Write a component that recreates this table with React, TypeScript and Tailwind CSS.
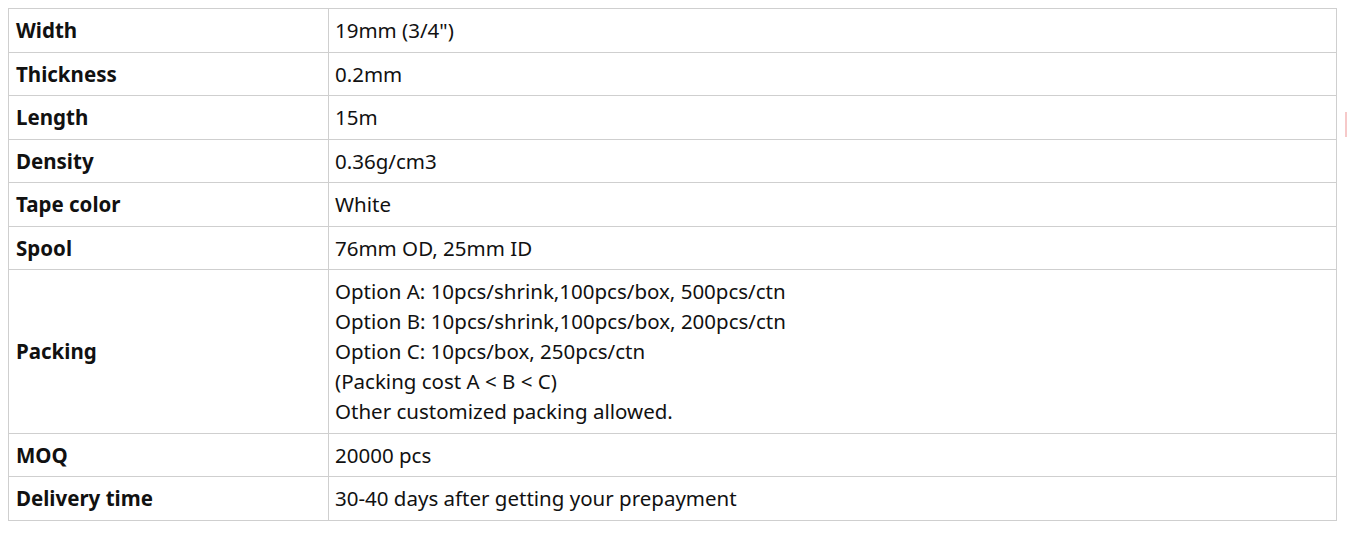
import React from "react";

const rows: { label: string; value: string[] }[] = [
  { label: "Width", value: ['19mm (3/4")'] },
  { label: "Thickness", value: ["0.2mm"] },
  { label: "Length", value: ["15m"] },
  { label: "Density", value: ["0.36g/cm3"] },
  { label: "Tape color", value: ["White"] },
  { label: "Spool", value: ["76mm OD, 25mm ID"] },
  {
    label: "Packing",
    value: [
      "Option A: 10pcs/shrink,100pcs/box, 500pcs/ctn",
      "Option B: 10pcs/shrink,100pcs/box, 200pcs/ctn",
      "Option C: 10pcs/box, 250pcs/ctn",
      "(Packing cost A < B < C)",
      "Other customized packing allowed.",
    ],
  },
  { label: "MOQ", value: ["20000 pcs"] },
  { label: "Delivery time", value: ["30-40 days after getting your prepayment"] },
];

const App = () => {
  return (
    <div className="relative w-[1347px] h-[534px] bg-white pt-2 pl-2 font-['Noto_Sans','Open_Sans',sans-serif] text-[#111]">
      <table className="w-[1329px] border-collapse text-[20.5px] leading-[30px]">
        <tbody>
          {rows.map((row) => (
            <tr key={row.label}>
              <td className="w-[320px] border border-[#cfcfcf] px-[7px] py-[6.25px] font-bold align-middle">
                {row.label}
              </td>
              <td className="border border-[#cfcfcf] px-[6px] py-[6.25px] align-middle">
                {row.value.map((line) => (
                  <div key={line}>{line}</div>
                ))}
              </td>
            </tr>
          ))}
        </tbody>
      </table>
      {/* faint pink edge mark */}
      <div className="absolute left-[1345px] top-[112px] w-[2px] h-[25px] bg-[#f6c9c9]" />
    </div>
  );
};

export default App;
